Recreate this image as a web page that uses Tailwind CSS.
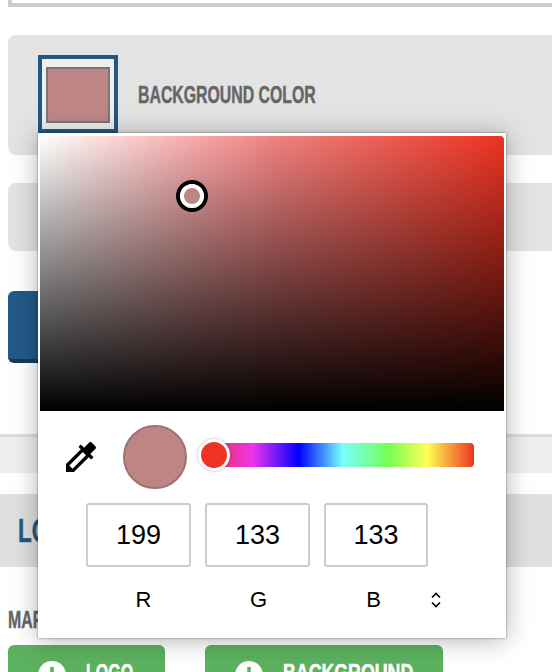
<!DOCTYPE html>
<html lang="en">
<head>
  <meta charset="UTF-8" />
  <title>Background color picker</title>
  <script src="https://cdn.jsdelivr.net/npm/@tailwindcss/browser@4"></script>
</head>
<body class="relative h-[672px] overflow-hidden bg-white pl-2 font-['Liberation_Sans',Arial,sans-serif]">
  <!-- page behind the picker -->
  <div class="h-[7px] border-x-4 border-b-4 border-[#cccccc] border-r-0"></div>

  <section class="mt-[28px] flex h-[120px] items-start rounded-l-lg bg-[#e3e3e3] pl-[30px] pt-5">
    <div class="flex h-[78px] w-[80px] items-start justify-center border-4 border-[#24577f] bg-[#eeeeee] pt-2">
      <div class="h-[56px] w-[64px] border-2 border-[#777777] bg-[#bd8685]"></div>
    </div>
    <span class="ml-5 mt-[25px] origin-left scale-x-[0.66] whitespace-nowrap text-[24px] leading-[30px] font-bold text-[#666666] [-webkit-text-stroke:0.5px_#666666]">BACKGROUND COLOR</span>
  </section>

  <div class="mt-[28px] h-[68px] rounded-l-lg bg-[#e3e3e3]"></div>

  <div class="mt-10 h-[72px] w-[220px] rounded-md border-b-4 border-[#163b57] bg-[#235a88]"></div>

  <div class="-ml-2 mt-[71px] h-[39px] border-t-[3px] border-[#dddddd] bg-[#eeeeee]"></div>

  <section class="-ml-2 mt-[21px] flex h-[73px] items-center bg-[#e0e0e0] pl-[18px]">
    <h2 class="origin-left scale-x-[0.66] text-[34px] font-bold text-[#24577f] [-webkit-text-stroke:0.5px_#24577f]">LOGO</h2>
  </section>

  <p class="mt-[38px] origin-left scale-x-[0.66] text-[24px] leading-[30px] font-bold text-[#666666] [-webkit-text-stroke:0.5px_#666666]">MARK</p>

  <div class="mt-[10px] flex gap-10">
    <button class="flex h-[56px] w-[157px] items-start rounded-md bg-[#5cb15f] pl-[30px] pt-4 text-[24px] leading-[28px] font-bold text-white [-webkit-text-stroke:0.5px_#ffffff]">
      <svg class="h-7 w-7 shrink-0" viewBox="0 0 28 28">
        <circle cx="14" cy="14" r="14" fill="#ffffff" />
        <path d="M14 6v16M6 14h16" stroke="#5cb15f" stroke-width="3.5" />
      </svg>
      <span class="-mt-[2px] ml-5 origin-left scale-x-[0.67]">LOGO</span>
    </button>
    <button class="flex h-[56px] w-[238px] items-start rounded-md bg-[#5cb15f] pl-[30px] pt-4 text-[24px] leading-[28px] font-bold text-white [-webkit-text-stroke:0.5px_#ffffff]">
      <svg class="h-7 w-7 shrink-0" viewBox="0 0 28 28">
        <circle cx="14" cy="14" r="14" fill="#ffffff" />
        <path d="M14 6v16M6 14h16" stroke="#5cb15f" stroke-width="3.5" />
      </svg>
      <span class="-mt-[2px] ml-5 origin-left scale-x-[0.74]">BACKGROUND</span>
    </button>
  </div>

  <!-- colour picker popover -->
  <div class="absolute left-[38px] top-[133px] h-[505px] w-[468px] bg-white pt-[3px] shadow-[0_2px_24px_rgba(0,0,0,0.3),0_0_2px_rgba(0,0,0,0.5)]">
    <div class="relative mx-[2px] h-[275px] rounded-tr-[4px] bg-[linear-gradient(to_top,#000000,transparent),linear-gradient(to_right,#ffffff_0%,#f9aaaa_33%,#f08280_51%,#ee3322_100%)]">
      <div class="absolute left-[136px] top-[44px] h-8 w-8 rounded-full border-[4px] border-black bg-[#bd8685] outline-[4px] -outline-offset-[8px] outline-white"></div>
    </div>

    <div class="mt-[14px] flex items-center pl-[23px]">
      <svg class="h-10 w-10" viewBox="0 0 24 24" fill="#000000">
        <path d="M20.71 5.63l-2.34-2.34c-.39-.39-1.02-.39-1.41 0l-3.12 3.12-1.93-1.91-1.41 1.41 1.42 1.42L3 16.25V21h4.75l8.92-8.92 1.42 1.42 1.41-1.41-1.92-1.92 3.12-3.12c.4-.4.4-1.03.01-1.42zM6.92 19L5 17.08l8.06-8.06 1.92 1.92L6.92 19z" />
      </svg>
      <div class="ml-[22px] h-16 w-16 rounded-full border-2 border-[#a07170] bg-[#bd8685]"></div>
      <div class="relative mb-1 ml-[13px] h-6 w-[274px] rounded-l-xl rounded-r-[4px] bg-[linear-gradient(to_right,#ee3322_0%,#ee33ee_19.3%,#0000ff_36%,#77ffff_52%,#77ff55_69%,#ffff55_83%,#ee3322_100%)]">
        <div class="absolute -top-1 -left-[2px] h-8 w-8 rounded-full border-[3px] border-white bg-[#ee3322] shadow-[0_0_3px_rgba(0,0,0,0.3)]"></div>
      </div>
    </div>

    <div class="mt-[14px] flex gap-[14px] pl-[48px]">
      <div class="flex h-16 w-[105px] items-center justify-center rounded-[3px] border-2 border-[#cccccc] text-[27px] text-black">199</div>
      <div class="flex h-16 w-[105px] items-center justify-center rounded-[3px] border-2 border-[#cccccc] text-[27px] text-black">133</div>
      <div class="flex h-16 w-[104px] items-center justify-center rounded-[3px] border-2 border-[#cccccc] text-[27px] text-black">133</div>
    </div>

    <div class="mt-5 flex items-center pl-[48px] text-[22px] leading-[26px] text-black">
      <span class="w-[115px] text-center">R</span>
      <span class="w-[115px] text-center">G</span>
      <span class="w-[115px] text-center">B</span>
      <svg class="h-4 w-[10px]" viewBox="0 0 10 16" fill="none" stroke="#000000" stroke-width="1.6">
        <path d="M1 5.5 5 1.5 9 5.5M1 10.5 5 14.5 9 10.5" />
      </svg>
    </div>
  </div>
</body>
</html>
